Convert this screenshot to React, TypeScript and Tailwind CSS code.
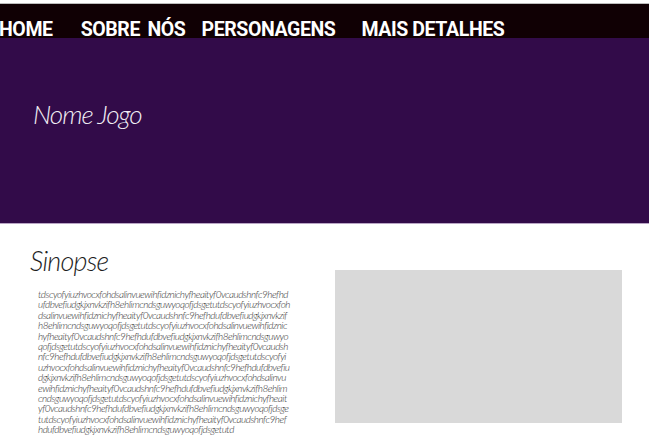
import React from 'react';

const trecho =
  'tdscyofyiuzhvocxfohdsalinvuewihfidznichyfheaityf0vcaudshnfc9hefhdufdbvefiudgkjxnvkzifh8ehlimcndsguwyoqofjdsgetu';
const sinopse = trecho.repeat(8) + 'td';

export default function App() {
  return (
    <div className="min-h-screen flex flex-col bg-white">
      {/* faixa de cima */}
      <div className="h-[4px] bg-white border-b border-[#bdbdbd]" />

      {/* Menu */}
      <nav className="h-[34px] bg-[#100004] flex items-end text-white font-bold text-[19.5px] leading-[17px] tracking-[-0.4px] [font-family:Roboto,sans-serif]">
        <a className="ml-[-1px]">HOME</a>
        <a className="ml-[28px] [word-spacing:3px]">SOBRE NÓS</a>
        <a className="ml-[16px]">PERSONAGENS</a>
        <a className="ml-[26px]">MAIS DETALHES</a>
      </nav>

      {/* Banner */}
      <div className="h-[186px] bg-[#320b49] border-b border-[#b9a5c5] flex items-center pl-[33px] pb-[32px]">
        <h1 className="text-[26px] italic font-light tracking-[-1px] text-[#f1eef4] [font-family:Lato,sans-serif]">Nome Jogo</h1>
      </div>

      {/* Sinopse */}
      <div className="flex">
        <div className="pl-[30px] pt-[23px] w-[300px]">
          <h2 className="text-[27px] italic font-light tracking-[-0.8px] text-[#1e1e1e] leading-none [font-family:Lato,sans-serif]">Sinopse</h2>
          <p className="mt-[15px] ml-[8px] w-[252px] break-all text-[10px] leading-[10.4px] italic font-light text-[#333] tracking-[-0.5px] [font-family:Lato,sans-serif]">
            {sinopse}
          </p>
        </div>
        <div className="ml-auto mr-[27px] mt-[46px] w-[287px] h-[153px] bg-[#d9d9d9]" />
      </div>
    </div>
  );
}
